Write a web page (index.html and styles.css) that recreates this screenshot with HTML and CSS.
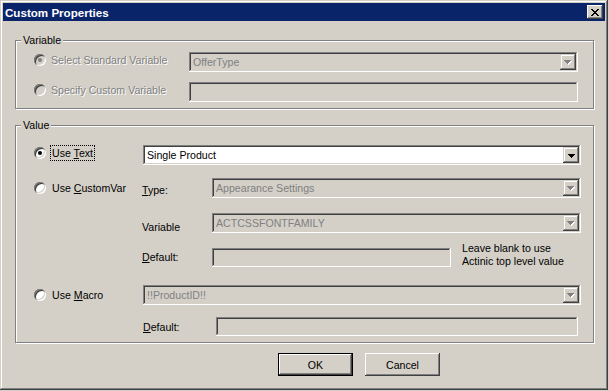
FILE: index.html
```html
<!DOCTYPE html>
<html>
<head>
<meta charset="utf-8">
<title>Custom Properties</title>
<link rel="stylesheet" href="styles.css">
</head>
<body>
<div class="window">
  <div class="titlebar">
    <span class="title">Custom Properties</span>
    <span class="close"><svg width="8" height="7" viewBox="0 0 8 7" shape-rendering="crispEdges"><path fill="#000" d="M0 0h2v1H0zM6 0h2v1H6zM1 1h2v1H1zM5 1h2v1H5zM2 2h4v1H2zM3 3h2v1H3zM2 4h4v1H2zM1 5h2v1H1zM5 5h2v1H5zM0 6h2v1H0zM6 6h2v1H6z"/></svg></span>
  </div>
  <div class="content">
    <div class="group group-var">
      <div class="group-label">Variable</div>
      <div class="row rv1">
        <div class="opt w155 mt1"><span class="radio dis checked"></span><span class="otext dis-text">Select Standard Variable</span></div>
        <div class="field w389"><span class="ftext">OfferType</span><span class="ddbtn"><svg class="arrow" width="8" height="5" viewBox="0 0 8 5" shape-rendering="crispEdges"><path fill="#fff" d="M1 1h7v1H1zM2 2h5v1H2zM3 3h3v1H3zM4 4h1v1H4z"/><path fill="#808080" d="M0 0h7v1H0zM1 1h5v1H1zM2 2h3v1H2zM3 3h1v1H3z"/></svg></span></div>
      </div>
      <div class="row rv2">
        <div class="opt w155 mt1"><span class="radio dis"></span><span class="otext dis-text">Specify Custom Variable</span></div>
        <div class="field w389"></div>
      </div>
    </div>

    <div class="group group-val">
      <div class="group-label">Value</div>
      <div class="row r1">
        <div class="opt opt-v w109 mt1"><span class="radio checked"></span><span class="otext focus">Use <u>T</u>ext</span></div>
        <div class="field white w438"><span class="ftext dark">Single Product</span><span class="ddbtn"><svg class="arrow" width="7" height="4" viewBox="0 0 7 4" shape-rendering="crispEdges"><path fill="#000" d="M0 0h7v1H0zM1 1h5v1H1zM2 2h3v1H2zM3 3h1v1H3z"/></svg></span></div>
      </div>
      <div class="row r2">
        <div class="opt opt-v w108 mt3"><span class="radio"></span><span class="otext">Use <u>C</u>ustomVar</span></div>
        <div class="lbl w70 mt5"><u>T</u>ype:</div>
        <div class="field w369"><span class="ftext">Appearance Settings</span><span class="ddbtn"><svg class="arrow" width="8" height="5" viewBox="0 0 8 5" shape-rendering="crispEdges"><path fill="#fff" d="M1 1h7v1H1zM2 2h5v1H2zM3 3h3v1H3zM4 4h1v1H4z"/><path fill="#808080" d="M0 0h7v1H0zM1 1h5v1H1zM2 2h3v1H2zM3 3h1v1H3z"/></svg></span></div>
      </div>
      <div class="row indent r3">
        <div class="lbl w70 mt7">Variable</div>
        <div class="field w369"><span class="ftext">ACTCSSFONTFAMILY</span><span class="ddbtn"><svg class="arrow" width="8" height="5" viewBox="0 0 8 5" shape-rendering="crispEdges"><path fill="#fff" d="M1 1h7v1H1zM2 2h5v1H2zM3 3h3v1H3zM4 4h1v1H4z"/><path fill="#808080" d="M0 0h7v1H0zM1 1h5v1H1zM2 2h3v1H2zM3 3h1v1H3z"/></svg></span></div>
      </div>
      <div class="row indent r4">
        <div class="lbl w70 mt8"><u>D</u>efault:</div>
        <div class="field tb w239 mt6"></div>
        <div class="hint">Leave blank to use<br>Actinic top level value</div>
      </div>
      <div class="row r5">
        <div class="opt opt-v w109 mt3"><span class="radio"></span><span class="otext">Use <u>M</u>acro</span></div>
        <div class="field w438"><span class="ftext">!!ProductID!!</span><span class="ddbtn"><svg class="arrow" width="8" height="5" viewBox="0 0 8 5" shape-rendering="crispEdges"><path fill="#fff" d="M1 1h7v1H1zM2 2h5v1H2zM3 3h3v1H3zM4 4h1v1H4z"/><path fill="#808080" d="M0 0h7v1H0zM1 1h5v1H1zM2 2h3v1H2zM3 3h1v1H3z"/></svg></span></div>
      </div>
      <div class="row indent2 r6">
        <div class="lbl w73 mt3"><u>D</u>efault:</div>
        <div class="field tb w362"></div>
      </div>
    </div>

    <div class="buttons">
      <button class="btn default">OK</button>
      <button class="btn">Cancel</button>
    </div>
  </div>
</div>
</body>
</html>
```

FILE: styles.css
```css
* { box-sizing: border-box; }
html, body { margin: 0; padding: 0; }
body {
  width: 609px;
  height: 391px;
  overflow: hidden;
  background: #d4d0c8;
  font-family: "Liberation Sans", Arial, sans-serif;
  font-size: 10.6px;
  color: #000;
}
.window {
  width: 608px;
  height: 390px;
  padding: 3px;
  background: #d4d0c8;
  box-shadow: inset -1px -1px #404040, inset 1px 1px #d4d0c8, inset -2px -2px #808080, inset 2px 2px #fff;
}
.titlebar {
  height: 18px;
  background: #0a246a;
  display: flex;
  align-items: center;
  justify-content: space-between;
  padding: 0 2px;
}
.title {
  color: #fff;
  font-weight: bold;
  font-size: 11.6px;
}
.close {
  width: 16px;
  height: 14px;
  background: #d4d0c8;
  display: flex;
  align-items: center;
  justify-content: center;
  box-shadow: inset -1px -1px #404040, inset 1px 1px #fff, inset -2px -2px #808080, inset 2px 2px #d4d0c8;
}
.close svg { display: block; }
.content { padding-left: 12px; }

.group {
  width: 579px;
  border: 1px solid #808080;
  box-shadow: 1px 1px #fff, inset 1px 1px #fff;
  padding-bottom: 6px;
}
.group-var { margin-top: 19px; }
.group-val { margin-top: 16px; }
.group-label {
  width: fit-content;
  margin: -7px 0 0 5px;
  padding: 0 2px;
  background: #d4d0c8;
  line-height: 13px;
}

.row { display: flex; align-items: flex-start; padding-left: 18px; }
.row.indent { padding-left: 126px; }
.row.indent2 { padding-left: 127px; }
.rv1 { margin-top: 5px; }
.rv2 { margin-top: 10px; }
.r1 { margin-top: 13px; }
.r2 { margin-top: 13px; }
.r3 { margin-top: 15px; }
.r4 { margin-top: 8px; }
.r5 { margin-top: 17px; }
.r6 { margin-top: 12px; }

.mt1 { margin-top: 1px; }
.mt3 { margin-top: 3px; }
.mt5 { margin-top: 5px; }
.mt6 { margin-top: 6px; }
.mt7 { margin-top: 7px; }
.mt8 { margin-top: 8px; }

.w70 { width: 70px; }
.w73 { width: 73px; }
.w108 { width: 108px; }
.w109 { width: 109px; }
.w155 { width: 155px; }
.w239 { width: 239px; }
.w362 { width: 362px; }
.w369 { width: 369px; }
.w389 { width: 389px; }
.w438 { width: 438px; }

.opt {
  display: flex;
  align-items: center;
  gap: 5px;
  height: 14px;
  line-height: 14px;
  flex: none;
  white-space: nowrap;
}
.opt-v { gap: 4px; }
.opt-v .otext {
  border: 1px dotted transparent;
  padding: 0 1px;
  line-height: 14px;
}
.opt-v .otext.focus { border-color: #000; }
.dis-text { color: #808080; text-shadow: 1px 1px 0 #fff; }

.radio {
  width: 12px;
  height: 12px;
  flex: none;
  border-radius: 50%;
  background: #fff;
  display: flex;
  align-items: center;
  justify-content: center;
  box-shadow: inset 1px 1px #808080, inset -1px -1px #fff, inset 2px 2px #404040, inset -2px -2px #d4d0c8;
}
.radio.dis { background: #d4d0c8; }
.radio.checked::after {
  content: "";
  width: 4px;
  height: 4px;
  border-radius: 50%;
  background: #000;
}
.radio.dis.checked::after { background: #808080; }

.lbl { line-height: 14px; flex: none; white-space: nowrap; }

.field {
  height: 20px;
  flex: none;
  display: flex;
  padding: 2px;
  background: #d4d0c8;
  box-shadow: inset -1px -1px #fff, inset 1px 1px #808080, inset -2px -2px #d4d0c8, inset 2px 2px #404040;
}
.field.tb { height: 19px; }
.field.white { background: #fff; }
.ftext {
  flex: 1;
  padding-left: 2px;
  line-height: 16px;
  color: #808080;
  white-space: nowrap;
  overflow: hidden;
}
.ftext.dark { color: #000; }
.ddbtn {
  width: 16px;
  height: 16px;
  flex: none;
  background: #d4d0c8;
  display: flex;
  align-items: center;
  justify-content: center;
  padding-top: 1px;
  box-shadow: inset -1px -1px #404040, inset 1px 1px #d4d0c8, inset -2px -2px #808080, inset 2px 2px #fff;
}
.arrow { display: block; }

.hint {
  margin-left: 11px;
  line-height: 13px;
  white-space: nowrap;
}

.buttons {
  display: flex;
  gap: 12px;
  margin-top: 10px;
  padding-left: 263px;
}
.btn {
  appearance: none;
  border: none;
  margin: 0;
  padding: 0;
  width: 75px;
  height: 23px;
  font: inherit;
  color: #000;
  background: #d4d0c8;
  display: flex;
  align-items: center;
  justify-content: center;
  box-shadow: inset -1px -1px #404040, inset 1px 1px #fff, inset -2px -2px #808080, inset 2px 2px #d4d0c8;
}
.btn.default {
  box-shadow: inset 0 0 0 1px #000, inset -2px -2px #404040, inset 2px 2px #fff, inset -3px -3px #808080;
}
```
